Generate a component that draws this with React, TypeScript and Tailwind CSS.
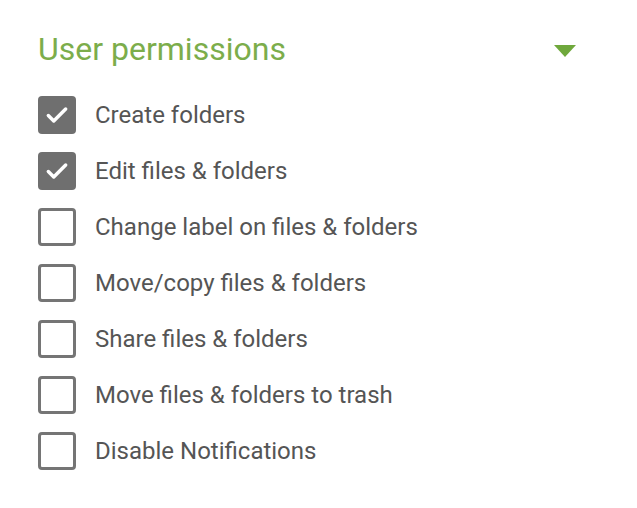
const permissions = [
  { label: "Create folders", checked: true },
  { label: "Edit files & folders", checked: true },
  { label: "Change label on files & folders", checked: false },
  { label: "Move/copy files & folders", checked: false },
  { label: "Share files & folders", checked: false },
  { label: "Move files & folders to trash", checked: false },
  { label: "Disable Notifications", checked: false },
];

const Checkbox = ({ checked }: { checked: boolean }) =>
  checked ? (
    <span className="flex h-[38px] w-[38px] flex-shrink-0 items-center justify-center rounded-[4px] bg-[#6f6f6f]">
      <svg width="26" height="26" viewBox="0 0 24 24" fill="none">
        <path
          d="M4 12.5l5 5L20 6.5"
          stroke="#fff"
          strokeWidth="3.2"
          strokeLinecap="round"
          strokeLinejoin="round"
        />
      </svg>
    </span>
  ) : (
    <span className="h-[38px] w-[38px] flex-shrink-0 rounded-[4px] border-[3px] border-[#757575] bg-white" />
  );

export default function App() {
  return (
    <div className="min-h-[508px] w-[637px] bg-white font-['Roboto',sans-serif]">
      <div className="px-[38px] pt-[30px]">
        <div className="flex items-center justify-between pr-[23px]">
          <h2 className="text-[32px] leading-[38px] text-[#7cad4b]">
            User permissions
          </h2>
          <svg width="22" height="12" viewBox="0 0 22 12" className="mt-[4px]">
            <path d="M0 0h22L11 12z" fill="#6fa83c" />
          </svg>
        </div>
        <ul className="mt-[28px] flex flex-col gap-[18px]">
          {permissions.map((p) => (
            <li key={p.label} className="flex items-center gap-[19px]">
              <Checkbox checked={p.checked} />
              <span className="text-[24px] leading-[38px] text-[#555555]">
                {p.label}
              </span>
            </li>
          ))}
        </ul>
      </div>
    </div>
  );
}
